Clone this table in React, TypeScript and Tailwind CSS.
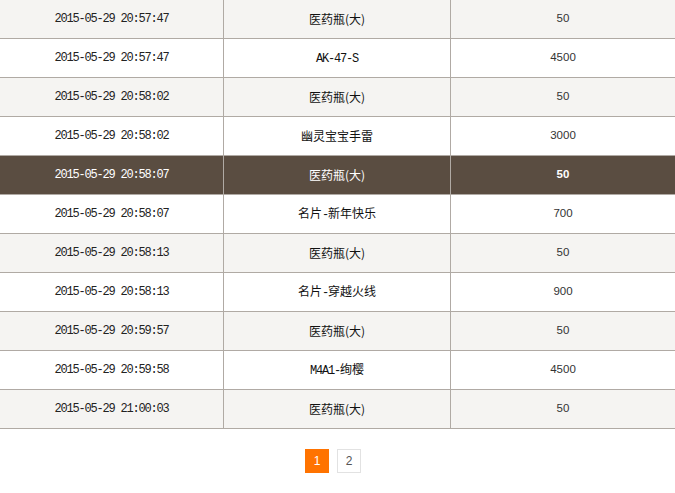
import React from 'react'

const rows = [
    { time: '2015-05-29 20:57:47', name: '医药瓶(大)', price: '50' },
    { time: '2015-05-29 20:57:47', name: 'AK-47-S', price: '4500' },
    { time: '2015-05-29 20:58:02', name: '医药瓶(大)', price: '50' },
    { time: '2015-05-29 20:58:02', name: '幽灵宝宝手雷', price: '3000' },
    { time: '2015-05-29 20:58:07', name: '医药瓶(大)', price: '50' },
    { time: '2015-05-29 20:58:07', name: '名片-新年快乐', price: '700' },
    { time: '2015-05-29 20:58:13', name: '医药瓶(大)', price: '50' },
    { time: '2015-05-29 20:58:13', name: '名片-穿越火线', price: '900' },
    { time: '2015-05-29 20:59:57', name: '医药瓶(大)', price: '50' },
    { time: '2015-05-29 20:59:58', name: 'M4A1-绚樱', price: '4500' },
    { time: '2015-05-29 21:00:03', name: '医药瓶(大)', price: '50' },
]

// ascii runs get the narrow mono face, the rest stays cjk
function ItemName({ text }: { text: string }) {
    const parts = text.split(/([\x20-\x7e]+)/).filter(Boolean)
    return (
        <span>
            {parts.map((p, i) =>
                /^[\x20-\x7e]+$/.test(p) && !/^[()]+$/.test(p) ? (
                    <span key={i} className="font-['Liberation_Mono',monospace] text-[12px] tracking-[-1.2px]">{p}</span>
                ) : (
                    <span key={i}>{p}</span>
                )
            )}
        </span>
    )
}

export default function App() {
    return (
        <div className="w-[675px] h-[493px] bg-white font-['Noto_Sans_CJK_SC',sans-serif] text-[12px] text-[#111] overflow-hidden">
            <div className="flex flex-col">
                {rows.map((r, i) => {
                    const active = i === 4
                    const bg = active ? 'bg-[#5a4d41] text-white' : i % 2 === 0 ? 'bg-[#f5f4f2]' : 'bg-white'
                    return (
                        <div key={i} className={`grid grid-cols-[223px_227px_1fr] h-[39px] border-b border-[#b0aaa4] ${bg}`}>
                            <div className={`flex items-center justify-center font-['Liberation_Mono',monospace] text-[12px] tracking-[-1.2px] ${active ? 'text-white' : 'text-[#222]'}`}>
                                {r.time}
                            </div>
                            <div className="flex items-center justify-center border-l border-[#b0aaa4]">
                                <ItemName text={r.name} />
                            </div>
                            <div className={`flex items-center justify-center border-l border-[#b0aaa4] font-['Liberation_Sans',sans-serif] text-[11.5px] ${active ? 'text-white font-bold' : 'text-[#333]'}`}>
                                {r.price}
                            </div>
                        </div>
                    )
                })}
            </div>

            <div className="flex justify-center gap-2 mt-[20px] pr-[9px] font-['Liberation_Sans',sans-serif] text-[12px]">
                <span className="w-6 h-6 flex items-center justify-center bg-[#ff7300] text-white">1</span>
                <span className="w-6 h-6 flex items-center justify-center border border-[#e2e2e2] text-[#555]">2</span>
            </div>
        </div>
    )
}
